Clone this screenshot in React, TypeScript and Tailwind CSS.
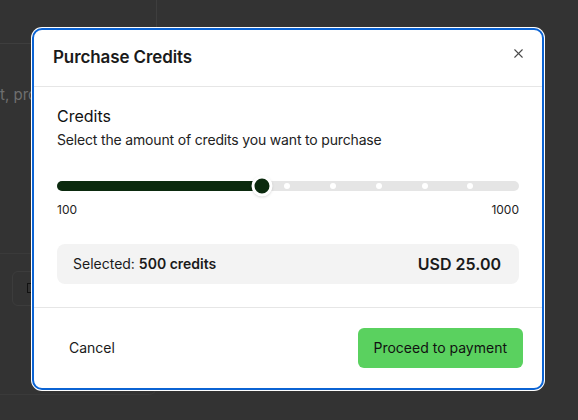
import React from 'react';
import { X } from 'lucide-react';

const MIN = 100;
const MAX = 1000;
const value = 500;
const ticks = [49.8, 59.7, 69.7, 79.6, 89.4];

export default function App() {
  const pct = ((value - MIN) / (MAX - MIN)) * 100;

  return (
    <div className="relative w-[578px] h-[420px] overflow-hidden bg-[#333333] font-['Inter',sans-serif] text-[#1a1a1a]">
      {/* dimmed page underneath */}
      <div className="w-[157px] h-full flex flex-col text-[#6f6f6f]">
        <div className="h-[44px] border-b border-r border-[#3e3e3e]" />
        <p className="mt-[40px] text-[15px] whitespace-nowrap">t, pro</p>
        <div className="mt-[146px] h-[142px] border-t border-r border-b border-[#3a3a3a] rounded-br-lg">
          <div className="ml-[12px] mt-[17px] h-[35px] w-[150px] rounded-md border border-[#3c3c3c] flex items-center pl-[14px]">
            <span className="w-[7px] h-[10px] border border-[#111]" />
          </div>
        </div>
      </div>

      {/* dialog */}
      <div className="absolute inset-0">
        <div className="ml-[32px] mt-[28px] w-[512px] bg-white rounded-[10px] border-2 border-[#0b63d3] ring-1 ring-white">
          <div className="h-[57px] flex items-center justify-between pl-[19px] pr-[16px] border-b border-[#e6e6e6]">
            <h2 className="text-[17px] font-semibold tracking-[-0.1px]">Purchase Credits</h2>
            <X size={15} strokeWidth={1.75} className="-mt-[10px] text-[#4a4a4a]" />
          </div>

          <div className="px-[23px] pt-[17px] pb-[23px] border-b border-[#e6e6e6]">
            <h3 className="text-base leading-6 font-normal text-[#111]">Credits</h3>
            <p className="mt-0.5 text-sm leading-5 tracking-[-0.17px] text-[#222]">Select the amount of credits you want to purchase</p>

            <div className="mt-[26px] relative h-5 flex items-center">
              <div className="relative w-full h-[10px] rounded-full bg-[#e5e5e5]">
                <div className="h-full rounded-full bg-[#0b2a0e]" style={{ width: `${pct}%` }} />
                {ticks.map((t) => (
                  <span
                    key={t}
                    className="absolute top-1/2 w-[6px] h-[6px] -ml-[3px] -mt-[3px] rounded-full bg-white"
                    style={{ left: `${t}%` }}
                  />
                ))}
              </div>
              <span
                className="absolute top-1/2 -translate-y-1/2 -translate-x-1/2 w-[21px] h-[21px] rounded-full bg-[#0b2a0e] border-[3px] border-white shadow-sm"
                style={{ left: `${pct}%` }}
              />
            </div>
            <div className="mt-1.5 flex justify-between text-xs leading-4 text-[#222]">
              <span>100</span>
              <span>1000</span>
            </div>

            <div className="mt-[26px] h-10 rounded-lg bg-[#f3f3f3] pl-4 pr-[18px] flex items-center justify-between">
              <span className="text-sm">
                Selected: <span className="font-semibold">500 credits</span>
              </span>
              <span className="text-base font-semibold">USD 25.00</span>
            </div>
          </div>

          <div className="px-[19px] pt-[20px] pb-[20px] flex items-center justify-between">
            <button className="h-10 px-4 rounded-md text-sm">Cancel</button>
            <button className="h-10 px-4 rounded-md bg-[#5ad15f] text-sm text-[#111]">Proceed to payment</button>
          </div>
        </div>
      </div>
    </div>
  );
}
